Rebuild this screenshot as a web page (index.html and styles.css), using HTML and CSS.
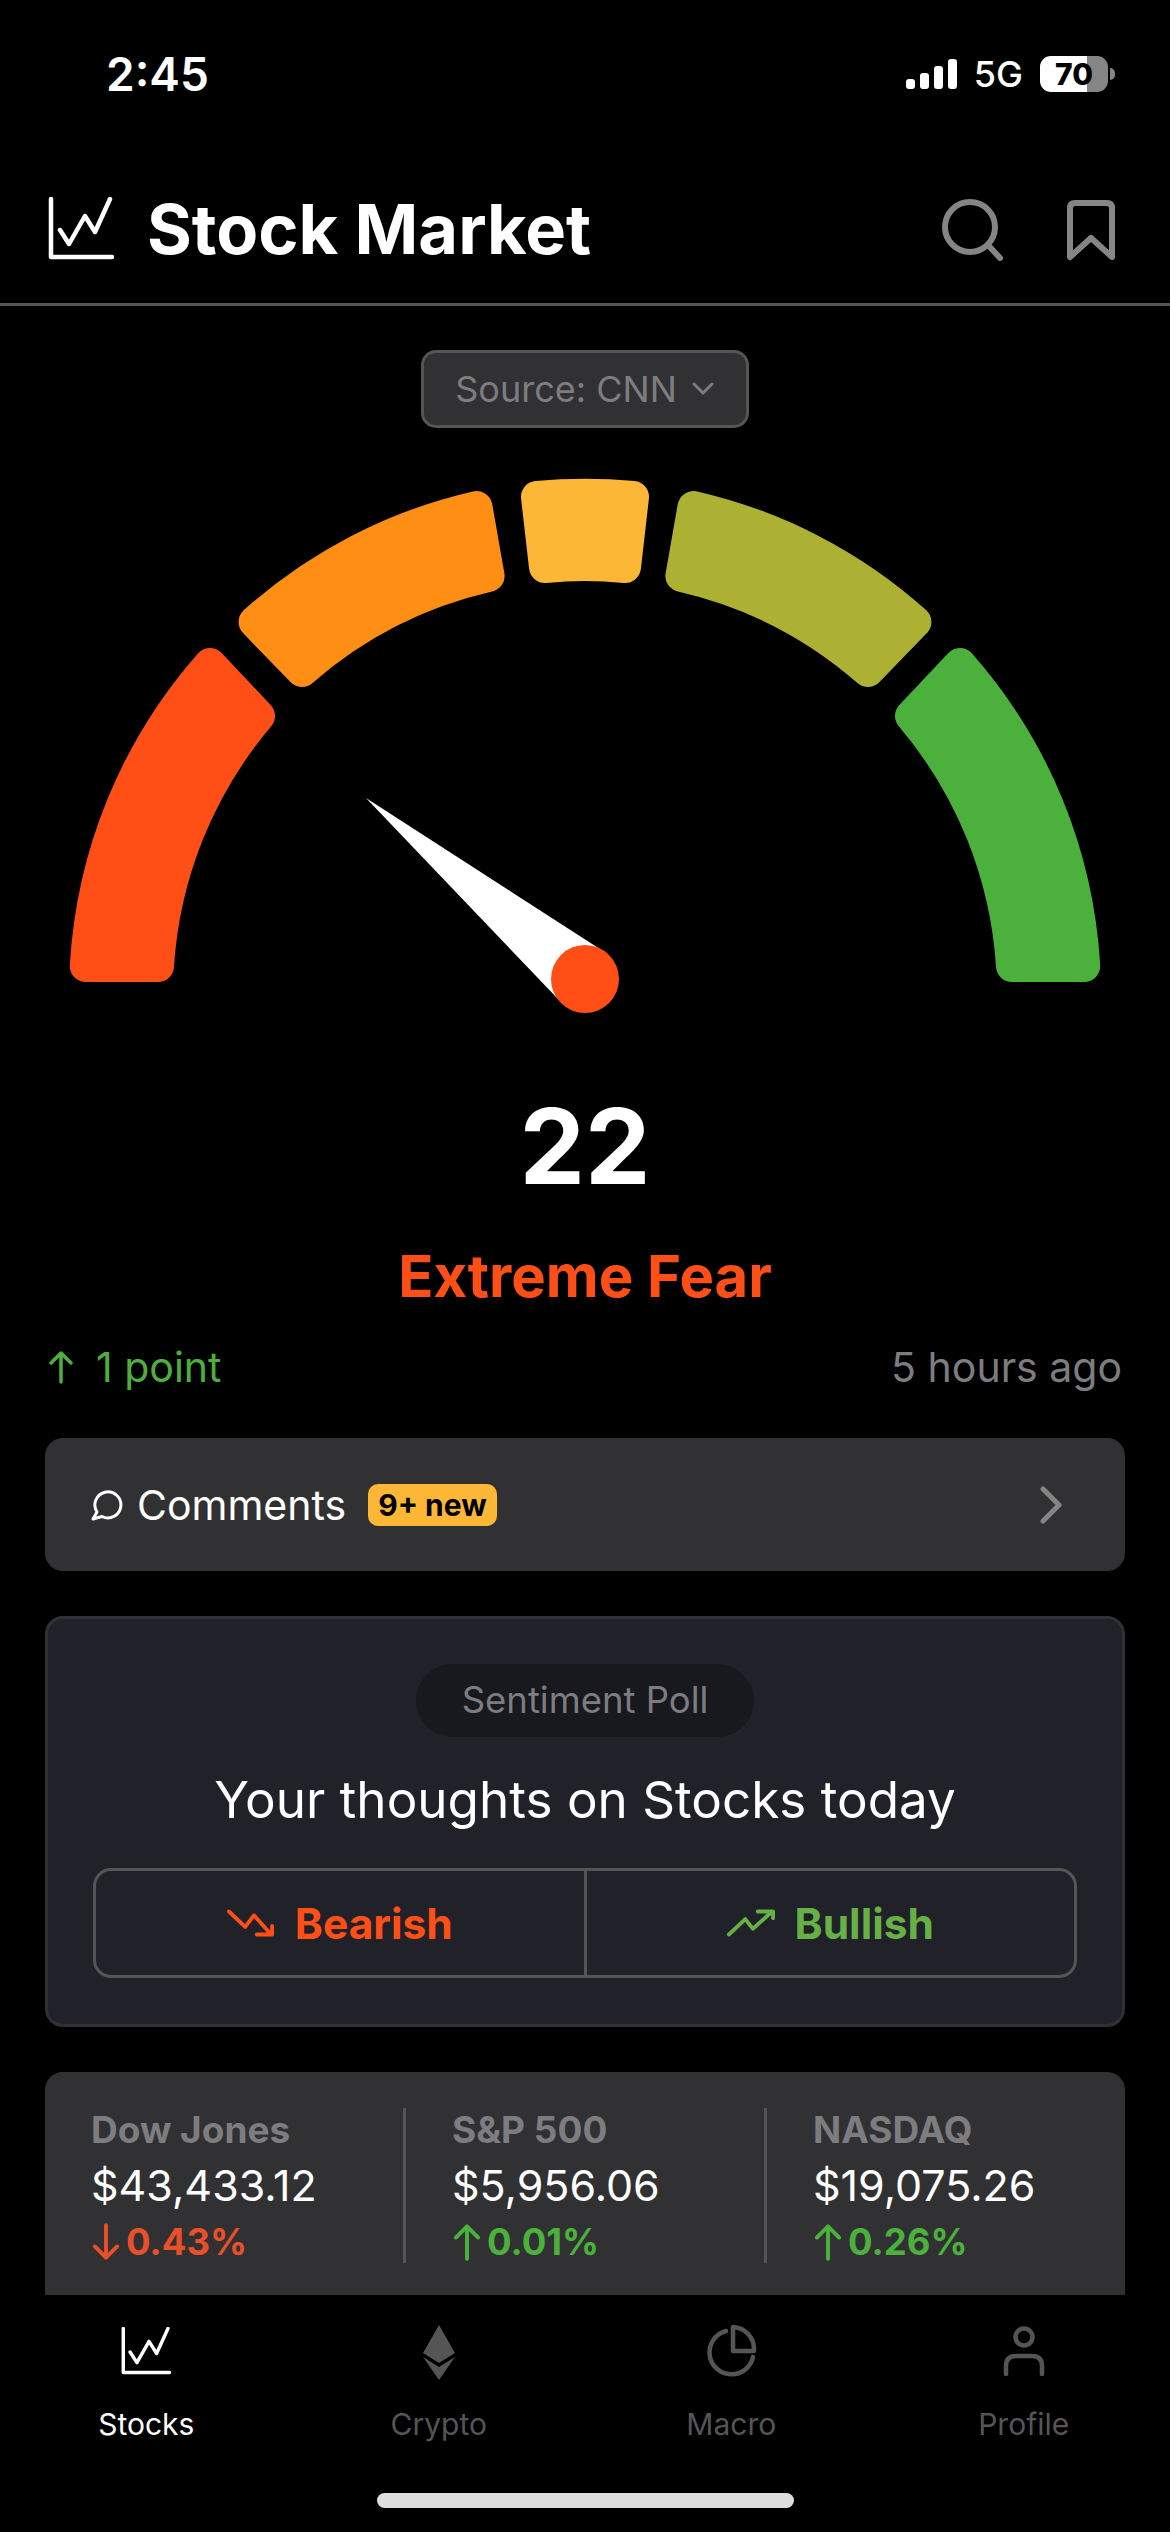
FILE: index.html
```html
<!DOCTYPE html>
<html lang="en">

<head>
    <meta charset="UTF-8" />
    <title>Stock Market</title>
    <link rel="stylesheet" href="styles.css">
</head>

<body>
    <svg class="defs" width="0" height="0">
        <symbol id="chart" viewBox="0 0 66 66">
            <path d="M3 2V60H64M12 33L21 47L37 19L47 35L62 2" fill="none" stroke="currentColor" stroke-width="4.5" stroke-linejoin="round" stroke-linecap="round" />
        </symbol>
        <symbol id="arrow-up" viewBox="0 0 26 34">
            <path d="M13 32V3M3 13L13 3L23 13" fill="none" stroke="currentColor" stroke-width="3.5" stroke-linecap="round" stroke-linejoin="round" />
        </symbol>
    </svg>

    <div class="status-bar">
        <span class="time">2:45</span>
        <div class="status-right">
            <svg class="signal" width="52" height="30" viewBox="0 0 52 30">
                <rect x="0" y="20" width="9" height="10" rx="3" fill="#fff" />
                <rect x="14" y="14" width="9" height="16" rx="3" fill="#fff" />
                <rect x="28" y="7" width="9" height="23" rx="3" fill="#fff" />
                <rect x="42" y="0" width="9" height="30" rx="3" fill="#fff" />
            </svg>
            <span class="network">5G</span>
            <div class="battery">70</div>
            <div class="battery-nub"></div>
        </div>
    </div>

    <header class="header">
        <svg class="header-logo"><use href="#chart" /></svg>
        <h1 class="title">Stock Market</h1>
        <svg class="search-icon" width="62" height="62" viewBox="0 0 62 62">
            <circle cx="28" cy="28" r="25" fill="none" stroke="#858585" stroke-width="6" />
            <path d="M46 46L58 59" fill="none" stroke="#858585" stroke-width="6" stroke-linecap="round" />
        </svg>
        <svg class="bookmark-icon" width="50" height="62" viewBox="0 0 50 62">
            <path d="M4 58V9Q4 4 9 4H41Q46 4 46 9V58L25 39Z" fill="none" stroke="#858585" stroke-width="6" stroke-linejoin="round" />
        </svg>
    </header>

    <main class="content">
        <div class="source-row">
            <div class="source">
                Source: CNN
                <svg width="24" height="14" viewBox="0 0 24 14">
                    <path d="M3 2L12 11L21 2" fill="none" stroke="#7d7d80" stroke-width="3" stroke-linecap="round" stroke-linejoin="round" />
                </svg>
            </div>
        </div>

        <svg class="gauge" width="1170" height="590" viewBox="0 440 1170 590">
            <g stroke-width="32" stroke-linejoin="round">
                <path d="M85.8 966A500 500 0 0 1 210 664L259 716A428 428 0 0 0 158 966Z" fill="#ff4f17" stroke="#ff4f17" />
                <path d="M254.6 622A500 500 0 0 1 476.5 507L488.6 576A428 428 0 0 0 302 671Z" fill="#ff8f14" stroke="#ff8f14" />
                <path d="M537 497A500 500 0 0 1 633 497L625 567A428 428 0 0 0 545 567Z" fill="#fdb737" stroke="#fdb737" />
                <path d="M693.5 507A500 500 0 0 1 915.4 622L868 671A428 428 0 0 0 681.4 576Z" fill="#adb133" stroke="#adb133" />
                <path d="M960 664A500 500 0 0 1 1084.2 966L1012 966A428 428 0 0 0 911 716Z" fill="#4bb13c" stroke="#4bb13c" />
            </g>
            <polygon points="366,798 603,951 558,999" fill="#fff" />
            <circle cx="585" cy="979" r="34" fill="#ff4f17" />
        </svg>

        <div class="score">22</div>
        <div class="score-label">Extreme Fear</div>

        <div class="change-row">
            <div class="change-up">
                <svg class="change-arrow"><use href="#arrow-up" /></svg>
                1 point
            </div>
            <div class="updated">5 hours ago</div>
        </div>

        <div class="comments card">
            <svg class="bubble" width="32" height="32" viewBox="0 0 32 32">
                <path d="M6 23A13 13 0 1 1 11 27.5L2 30Z" fill="none" stroke="#fff" stroke-width="3" stroke-linejoin="round" />
            </svg>
            <span class="comments-text">Comments</span>
            <span class="badge">9+ new</span>
            <svg class="chevron" width="24" height="38" viewBox="0 0 24 38">
                <path d="M4 3L20 19L4 35" fill="none" stroke="#858585" stroke-width="5" stroke-linecap="round" stroke-linejoin="round" />
            </svg>
        </div>

        <section class="poll">
            <div class="poll-pill">Sentiment Poll</div>
            <div class="poll-title">Your thoughts on Stocks today</div>
            <div class="poll-buttons">
                <div class="poll-btn bearish">
                    <svg width="48" height="30" viewBox="0 0 50 30">
                        <path d="M2 3L19 19L28 7L46 27M31 27H47V18" fill="none" stroke="currentColor" stroke-width="4" stroke-linejoin="round" stroke-linecap="round" />
                    </svg>
                    Bearish
                </div>
                <div class="poll-btn bullish">
                    <svg width="48" height="30" viewBox="0 0 50 30">
                        <path d="M2 27L19 11L27 21L47 3M32 3H48V10" fill="none" stroke="currentColor" stroke-width="4" stroke-linejoin="round" stroke-linecap="round" />
                    </svg>
                    Bullish
                </div>
            </div>
        </section>

        <div class="stats card">
            <div class="stat">
                <div class="stat-name">Dow Jones</div>
                <div class="stat-value">$43,433.12</div>
                <div class="stat-change down">
                    <svg class="stat-arrow flip"><use href="#arrow-up" /></svg>0.43%
                </div>
            </div>
            <div class="stat">
                <div class="stat-name">S&amp;P 500</div>
                <div class="stat-value">$5,956.06</div>
                <div class="stat-change up">
                    <svg class="stat-arrow"><use href="#arrow-up" /></svg>0.01%
                </div>
            </div>
            <div class="stat">
                <div class="stat-name">NASDAQ</div>
                <div class="stat-value">$19,075.26</div>
                <div class="stat-change up">
                    <svg class="stat-arrow"><use href="#arrow-up" /></svg>0.26%
                </div>
            </div>
        </div>
    </main>

    <nav class="tabs">
        <div class="tab active">
            <svg class="tab-icon chart-small"><use href="#chart" /></svg>
            Stocks
        </div>
        <div class="tab">
            <svg class="tab-icon" viewBox="0 0 56 56">
                <path d="M28 1L12 29L28 39L44 29Z" fill="#555" />
                <path d="M12 33L28 43L44 33L28 56Z" fill="#555" />
            </svg>
            Crypto
        </div>
        <div class="tab">
            <svg class="tab-icon" viewBox="0 0 56 56">
                <path d="M23 7A22 22 0 1 0 50 33" fill="none" stroke="#555" stroke-width="4.5" stroke-linecap="round" />
                <path d="M30 3A22 22 0 0 1 51 25V27H30Z" fill="none" stroke="#555" stroke-width="4.5" stroke-linejoin="round" />
            </svg>
            Macro
        </div>
        <div class="tab">
            <svg class="tab-icon" viewBox="0 0 56 56">
                <circle cx="28" cy="13" r="8.5" fill="none" stroke="#555" stroke-width="4.5" />
                <path d="M10 50V42Q10 32 20 32H36Q46 32 46 42V50" fill="none" stroke="#555" stroke-width="4.5" stroke-linecap="round" />
            </svg>
            Profile
        </div>
        <div class="home-indicator"></div>
    </nav>
</body>

</html>
```

FILE: styles.css
```css
* {
    box-sizing: border-box;
}

body {
    font-family: Inter, "Noto Sans", sans-serif;
    margin: 0;
    width: 1170px;
    height: 2532px;
    overflow: hidden;
    display: flex;
    flex-direction: column;
    background-color: #000;
    color: #fff;
}

.defs {
    display: block;
    height: 0;
}

/* Status bar */
.status-bar {
    height: 110px;
    flex-shrink: 0;
    padding: 51px 55px 0 106px;
    display: flex;
    justify-content: space-between;
    align-items: flex-start;
}

.time {
    font-size: 46px;
    font-weight: 600;
    line-height: 46px;
}

.status-right {
    display: flex;
    align-items: center;
    height: 46px;
}

.signal {
    margin-right: 16px;
}

.network {
    font-size: 36px;
    font-weight: 500;
    margin-right: 17px;
}

.battery {
    width: 68px;
    height: 36px;
    border-radius: 11px;
    background: linear-gradient(to right, #fff 69%, #858585 69%);
    color: #000;
    font-size: 30px;
    font-weight: 800;
    line-height: 36px;
    text-align: center;
}

.battery-nub {
    width: 5px;
    height: 12px;
    margin-left: 2px;
    border-radius: 0 6px 6px 0;
    background: #858585;
}

/* Header */
.header {
    height: 196px;
    flex-shrink: 0;
    padding: 46px 54px 0 48px;
    display: flex;
    align-items: center;
    border-bottom: 3px solid #555;
}

.header-logo {
    width: 66px;
    height: 66px;
    margin-right: 33px;
    color: #fff;
}

.title {
    margin: 0;
    font-size: 68.5px;
    font-weight: 700;
    flex: 1;
}

.search-icon {
    margin-right: 62px;
}

/* Main */
.content {
    flex: 1;
    overflow: hidden;
    padding: 0 45px;
}

.source-row {
    display: flex;
    justify-content: center;
    margin-top: 44px;
}

.source {
    width: 328px;
    height: 78px;
    display: flex;
    align-items: center;
    justify-content: center;
    gap: 14px;
    background: #313133;
    border: 3px solid #555;
    border-radius: 15px;
    color: #7d7d80;
    font-size: 36px;
}

.gauge {
    display: block;
    margin: 12px 0 0 -45px;
}

.score {
    margin-top: 64px;
    font-size: 104px;
    font-weight: 700;
    line-height: 104px;
    text-align: center;
}

.score-label {
    margin-top: 43px;
    color: #ff4f17;
    font-size: 58px;
    font-weight: 700;
    line-height: 70px;
    text-align: center;
}

.change-row {
    margin-top: 28px;
    padding: 0 3px;
    display: flex;
    justify-content: space-between;
    font-size: 41px;
    line-height: 56px;
}

.change-up {
    color: #4bb13c;
    display: flex;
    align-items: center;
    gap: 22px;
}

.change-arrow {
    width: 26px;
    height: 34px;
}

.updated {
    color: #7d7d80;
}

.card {
    background: #313133;
    border-radius: 18px;
}

.comments {
    height: 133px;
    margin-top: 43px;
    padding: 0 62px 0 46px;
    display: flex;
    align-items: center;
    font-size: 41px;
}

.comments-text {
    margin-left: 14px;
}

.badge {
    margin-left: 22px;
    padding: 0 10px;
    height: 42px;
    line-height: 42px;
    background: #fdb737;
    border-radius: 10px;
    color: #000;
    font-size: 30px;
    font-weight: 700;
}

.chevron {
    margin-left: auto;
}

/* Sentiment poll */
.poll {
    height: 411px;
    margin-top: 45px;
    padding-top: 45px;
    display: flex;
    flex-direction: column;
    align-items: center;
    background: #202129;
    border: 3px solid #303136;
    border-radius: 18px;
}

.poll-pill {
    width: 338px;
    height: 73px;
    line-height: 73px;
    text-align: center;
    background: #18191e;
    border-radius: 37px;
    color: #7d7d80;
    font-size: 36.5px;
}

.poll-title {
    margin-top: 31px;
    font-size: 51.2px;
    line-height: 62px;
}

.poll-buttons {
    width: 984px;
    height: 110px;
    margin-top: 38px;
    display: flex;
    border: 3px solid #555;
    border-radius: 18px;
}

.poll-btn {
    flex: 1;
    display: flex;
    align-items: center;
    justify-content: center;
    gap: 20px;
    font-size: 42.5px;
    font-weight: 700;
}

.bearish {
    color: #ff4f17;
    border-right: 3px solid #555;
}

.bullish {
    color: #67b045;
}

/* Index stats, runs under the tab bar */
.stats {
    height: 240px;
    margin-top: 45px;
    padding-top: 36px;
    display: grid;
    grid-template-columns: repeat(3, 361px);
    align-items: start;
}

.stat {
    height: 155px;
    padding-left: 46px;
    border-right: 3px solid #555;
}

.stat:last-child {
    border-right: none;
}

.stat-name {
    color: #7d7d80;
    font-size: 37px;
    font-weight: 700;
    line-height: 44px;
}

.stat-value {
    margin-top: 7px;
    font-size: 43px;
    line-height: 52px;
}

.stat-change {
    margin-top: 8px;
    display: flex;
    align-items: center;
    gap: 5px;
    font-size: 36.5px;
    font-weight: 700;
    line-height: 46px;
}

.stat-arrow {
    width: 30px;
    height: 38px;
}

.flip {
    transform: scaleY(-1);
}

.down {
    color: #e9502a;
}

.up {
    color: #4bb13c;
}

/* Tab bar */
.tabs {
    height: 237px;
    flex-shrink: 0;
    padding-top: 29px;
    display: grid;
    grid-template-columns: repeat(4, 1fr);
    grid-template-rows: 130px auto;
    background: #000;
}

.tab {
    display: flex;
    flex-direction: column;
    align-items: center;
    gap: 24px;
    color: #555;
    font-size: 30px;
    line-height: 40px;
}

.tab.active {
    color: #fff;
}

.tab-icon {
    width: 56px;
    height: 56px;
}

.chart-small {
    width: 50px;
    height: 50px;
    margin: 3px 0;
}

.home-indicator {
    grid-column: 1 / -1;
    justify-self: center;
    width: 417px;
    height: 15px;
    margin-top: 39px;
    border-radius: 8px;
    background: #dedede;
}
```
